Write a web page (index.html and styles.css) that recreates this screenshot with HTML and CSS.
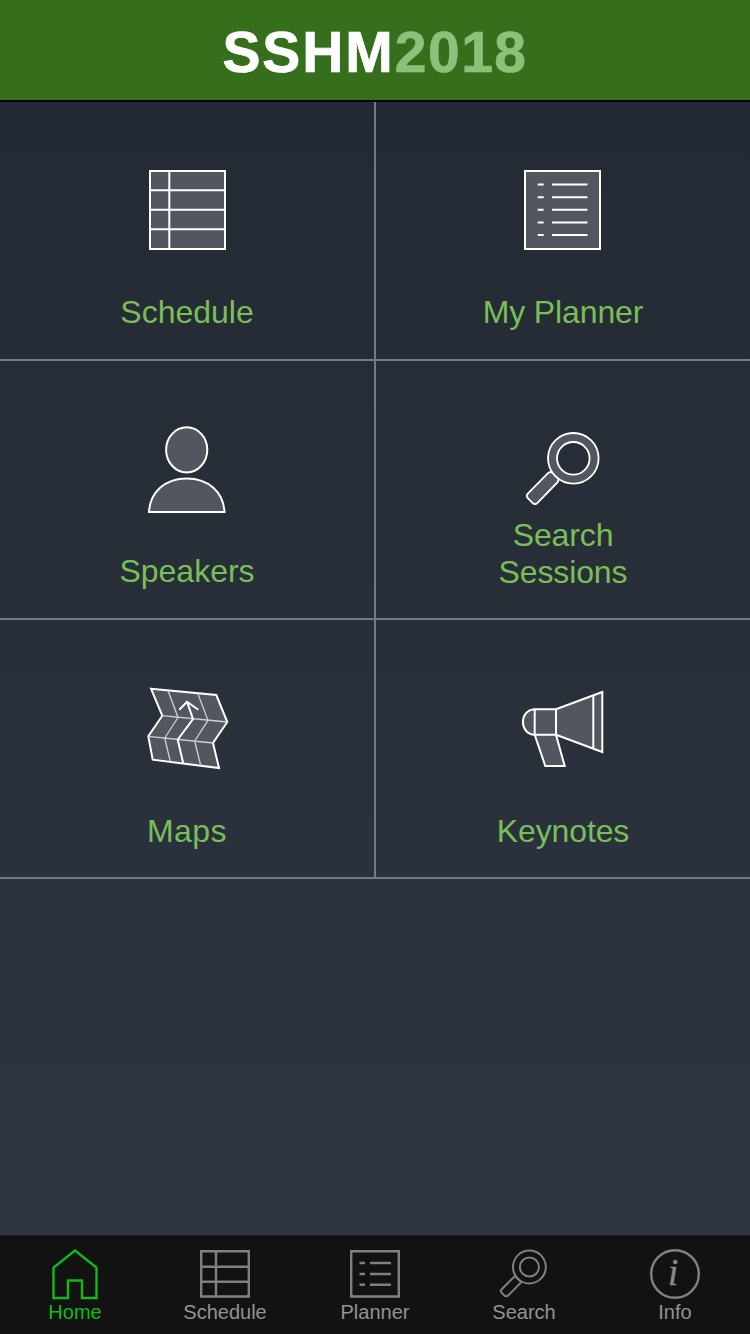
FILE: index.html
```html
<!DOCTYPE html>
<html lang="en">
<head>
<meta charset="utf-8">
<title>SSHM2018</title>
<link rel="stylesheet" href="styles.css">
</head>
<body>
<div class="app">
  <header class="header"><h1 class="title"><span class="title-name">SSHM</span><span class="title-year">2018</span></h1></header>
  <main class="content">
    <div class="grid">
      <a class="tile">
        <svg class="tile-icon" viewBox="0 0 100 97"><rect x="13" y="11" width="75" height="78"/><path d="M32.3 11V89M13 30.3H88M13 49.8H88M13 69.3H88"/></svg>
        <span class="tile-label">Schedule</span>
      </a>
      <a class="tile">
        <svg class="tile-icon" viewBox="0 0 100 97"><rect x="12" y="11" width="75" height="78"/><path d="M24.7 24.5h6M39 24.5h35.5M24.7 37.3h6M39 37.3h35.5M24.7 49.8h6M39 49.8h35.5M24.7 62.4h6M39 62.4h35.5M24.7 75h6M39 75h35.5"/></svg>
        <span class="tile-label snug">My Planner</span>
      </a>
      <a class="tile">
        <svg class="tile-icon" viewBox="0 0 100 97"><ellipse cx="49.7" cy="30.8" rx="20.6" ry="22.6"/><path d="M12 93C13 73 28 59.5 49.7 59.5S86.500 73 87.500 93Z"/></svg>
        <span class="tile-label">Speakers</span>
      </a>
      <a class="tile">
        <svg class="tile-icon thin" viewBox="0 0 100 97"><path d="M35 54.200Q37.500 51.700 40 54.200L44.300 58.500Q46.800 61 44.300 63.500L24.500 83.800Q22 86.300 19.500 83.800L15 79.300Q12.500 76.800 15 74.300Z"/><path fill-rule="evenodd" d="M35 39.300a25.300 25.300 0 1 0 50.600 0a25.300 25.300 0 1 0-50.600 0ZM44 39.300a16.300 16.300 0 1 1 32.600 0a16.300 16.300 0 1 1-32.600 0Z"/></svg>
        <span class="tile-label low snug">Search<br>Sessions</span>
      </a>
      <a class="tile">
        <svg class="tile-icon" viewBox="0 0 100 97"><path d="M14 10.700L79.300 17L90.300 44L76 65L82 90L15.700 81.700L11.300 58.300L25.300 37.700Z"/><path class="fold" d="M25.300 37.700L90.300 44M11.300 58.300L76 65M31 12.500L41 39.500L27.700 60L33.300 83.500M60.700 15.300L71 42.300L57.700 63L63.700 87.500"/><path class="open" d="M50 23.700L56 41L40.700 61.700L46.300 85.500M42.300 31.700L50 23.700L61.300 31.700"/></svg>
        <span class="tile-label low loose">Maps</span>
      </a>
      <a class="tile">
        <svg class="tile-icon" viewBox="0 0 100 97"><path d="M21.700 31.300C6 32 6 56 21.700 56.700ZM21.700 31.300H43V56.700H21.700ZM43 31.300L89.300 14V74L43 56.700ZM21.700 56.700H43L51.700 88H32.300Z"/><path d="M80.300 17.500V70.500"/></svg>
        <span class="tile-label low snug">Keynotes</span>
      </a>
    </div>
  </main>
  <nav class="tabs">
    <a class="tab active"><svg class="tab-icon" viewBox="0 0 60 57"><path d="M30 6.500L51.500 23.500V54H37V36.500H23V54H8.500V23.500Z"/></svg><span>Home</span></a>
    <a class="tab"><svg class="tab-icon" viewBox="0 0 60 57"><path d="M6.200 7.200H53.800V52.500H6.200ZM21 7V53M6 22.700H54M6 37.700H54"/></svg><span>Schedule</span></a>
    <a class="tab"><svg class="tab-icon" viewBox="0 0 60 57"><path d="M6.200 7.200H53.800V52.500H6.200ZM14.500 19H20M25 19H46M14.500 30H20M25 30H46M14.500 40.700H20M25 40.700H46"/></svg><span>Planner</span></a>
    <a class="tab"><svg class="tab-icon search" viewBox="0 0 60 57"><circle cx="34.400" cy="23" r="16.400"/><circle cx="34.400" cy="23" r="9.500"/><path d="M20.500 32.500L26.300 38.300L13.300 51.300Q11.200 53.400 9.100 51.300L6.700 48.900Q4.900 47 6.700 45.200L19.500 32.500Q20.500 31.700 21.500 33"/></svg><span class="search-label">Search</span></a>
    <a class="tab"><svg class="tab-icon" viewBox="0 0 60 57"><circle cx="30" cy="30" r="23.800"/><text class="info-mark" x="23" y="41.300">i</text></svg><span>Info</span></a>
  </nav>
</div>
</body>
</html>
```
FILE: styles.css
```css
* { box-sizing: border-box; }
body {
  margin: 0;
  font-family: "Liberation Sans", Arial, sans-serif;
  background: #121212;
}
.app {
  width: 750px;
  height: 1334px;
  display: flex;
  flex-direction: column;
  overflow: hidden;
}
.header {
  height: 102px;
  flex: none;
  display: flex;
  justify-content: center;
  align-items: center;
  background: #356f1c;
  border-bottom: 2px solid #000;
}
.title {
  margin: 0;
  padding-top: 3px;
  font-size: 57px;
  line-height: 64px;
  font-weight: 700;
  -webkit-text-stroke-width: 0.7px;
}
.title-name { color: #fff; letter-spacing: 1.9px; }
.title-year { color: #8dc07a; letter-spacing: 1.5px; }
.content {
  flex: 1;
  background: linear-gradient(#242a33, #2e3541);
}
.grid {
  display: grid;
  grid-template-columns: 376px 374px;
  grid-auto-rows: 259px;
}
.tile {
  display: flex;
  flex-direction: column;
  align-items: center;
  padding-top: 58px;
  border-bottom: 2px solid #757980;
}
.tile:nth-child(odd) { border-right: 2px solid #757980; }
.tile-icon {
  width: 100px;
  height: 97px;
  flex: none;
  fill: #52565f;
  stroke: #fff;
  stroke-width: 2;
}
.tile-icon.thin { stroke-width: 1.8; }
.tile-icon .fold { fill: none; stroke: #d0d2d5; stroke-width: 1.3; }
.tile-icon .open { fill: none; }
.tile-label {
  height: 74px;
  display: flex;
  align-items: flex-end;
  text-align: center;
  font-size: 32px;
  line-height: 37px;
  color: #77bf56;
}
.tile-label.low { height: 75px; }
.tile-label.snug { letter-spacing: -0.12px; }
.tile-label.loose { letter-spacing: 0.4px; }
.tabs {
  height: 99px;
  flex: none;
  display: grid;
  grid-template-columns: repeat(5, 150px);
  background: #121212;
  border-top: 1px solid #1e2025;
}
.tab {
  display: flex;
  flex-direction: column;
  align-items: center;
  padding-top: 8px;
  font-size: 20px;
  line-height: 23px;
  color: #929292;
}
.tab.active { color: #0bbd14; }
.tab-icon {
  width: 60px;
  height: 57px;
  flex: none;
  fill: none;
  stroke: #808080;
  stroke-width: 2.4;
}
.active .tab-icon { stroke: #0bbd14; }
.tab-icon.search { stroke-width: 2; }
.search-label { margin-right: 2px; }
.info-mark {
  font: italic 37px "Liberation Serif", serif;
  fill: #8a8a8a;
  stroke: #8a8a8a;
  stroke-width: 0.4px;
}
```
